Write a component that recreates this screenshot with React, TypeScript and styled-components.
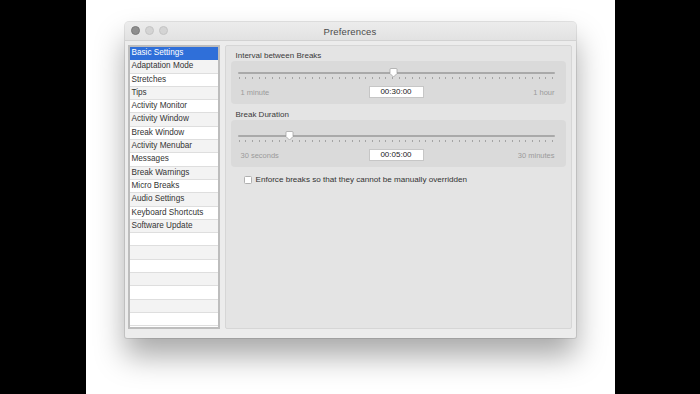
import React from "react";
import styled, { createGlobalStyle } from "styled-components";

const Global = createGlobalStyle`
  html, body { margin: 0; padding: 0; background: #000; }
  body { font-family: "Liberation Sans", Arial, sans-serif; }
  #root { width: 700px; height: 394px; }
`;

const Stage = styled.div`
  width: 700px;
  height: 394px;
  display: flex;
  justify-content: center;
  background: #000;
`;

const Canvas = styled.div`
  width: 529px;
  height: 394px;
  background: #fff;
  padding: 22px 0 0 39px;
  box-sizing: border-box;
`;

const Window = styled.div`
  width: 451px;
  height: 316px;
  background: #ececec;
  border-radius: 4px 4px 2px 2px;
  box-shadow: 0 18px 30px rgba(0, 0, 0, 0.34), 0 0 0 1px rgba(0, 0, 0, 0.1);
  display: flex;
  flex-direction: column;
  overflow: hidden;
`;

const TitleBar = styled.div`
  height: 18px;
  position: relative;
  display: flex;
  align-items: center;
  justify-content: center;
  background: linear-gradient(#ececec, #e2e2e2);
  border-bottom: 1px solid #d2d2d2;
  flex-shrink: 0;
`;

const Lights = styled.div`
  position: absolute;
  left: 6px;
  top: 4px;
  display: flex;
  gap: 5px;
`;

const Light = styled.span<{ $dark?: boolean }>`
  width: 9px;
  height: 9px;
  border-radius: 50%;
  background: ${(p) => (p.$dark ? "#8e8e8e" : "#d4d4d4")};
  border: 0.5px solid ${(p) => (p.$dark ? "#7a7a7a" : "#c4c4c4")};
  box-sizing: border-box;
`;

const Title = styled.div`
  font-size: 9.5px;
  color: #4a4a4a;
  letter-spacing: 0.15px;
`;

const Body = styled.div`
  flex: 1;
  display: flex;
  gap: 5px;
  padding: 4px 4px 9px 3px;
`;

const Sidebar = styled.div`
  width: 92px;
  border: 2px solid #bdbdbd;
  box-sizing: border-box;
  background: #fff;
  display: flex;
  flex-direction: column;
  overflow: hidden;
`;

const Row = styled.div<{ $selected?: boolean; $alt?: boolean }>`
  height: 13.3px;
  flex-shrink: 0;
  box-sizing: border-box;
  padding-left: 2px;
  font-size: 8.2px;
  line-height: 12.3px;
  white-space: nowrap;
  color: ${(p) => (p.$selected ? "#fff" : "#333")};
  background: ${(p) => (p.$selected ? "#2f6fd9" : p.$alt ? "#f3f3f3" : "#fff")};
  border-bottom: 1px solid ${(p) => (p.$selected ? "#2f6fd9" : "#dedede")};
`;

const Panel = styled.div`
  flex: 1;
  background: #e4e4e4;
  border: 1px solid #d6d6d6;
  border-radius: 2px;
  padding: 4px 5px 0 5px;
  display: flex;
  flex-direction: column;
`;

const SectionLabel = styled.div<{ $top: number }>`
  font-size: 8px;
  line-height: 10px;
  color: #3a3a3a;
  padding-left: 5px;
  margin-top: ${(p) => p.$top}px;
`;

const Group = styled.div<{ $padTop: number }>`
  background: #dadada;
  border-radius: 4px;
  padding: ${(p) => p.$padTop}px 11px 6px 7px;
  display: flex;
  flex-direction: column;
`;

const SliderArea = styled.div`
  position: relative;
  height: 14px;
`;

const Track = styled.div`
  position: absolute;
  left: 0;
  right: 0;
  top: 0;
  height: 2px;
  border-radius: 1px;
  background: #a9a9a9;
`;

const Ticks = styled.div`
  position: absolute;
  left: 1px;
  right: 1px;
  top: 5px;
  display: flex;
  justify-content: space-between;
`;

const Tick = styled.span`
  width: 1px;
  height: 2px;
  background: #a4a4a4;
`;

const Knob = styled.svg`
  position: absolute;
  top: -4px;
  margin-left: -4px;
`;

const BottomRow = styled.div`
  display: grid;
  grid-template-columns: 1fr auto 1fr;
  align-items: center;
  height: 12px;
`;

const EndLabel = styled.span<{ $right?: boolean }>`
  font-size: 7.5px;
  color: #9a9a9a;
  justify-self: ${(p) => (p.$right ? "end" : "start")};
  padding-left: ${(p) => (p.$right ? 0 : 3)}px;
`;

const Field = styled.div`
  width: 55px;
  height: 12px;
  box-sizing: border-box;
  background: #fff;
  border: 1px solid #c6c6c6;
  font-size: 8px;
  line-height: 10px;
  text-align: center;
  color: #222;
`;

const CheckRow = styled.label`
  display: flex;
  align-items: center;
  gap: 4px;
  margin-top: 8px;
  padding-left: 13px;
  font-size: 8.1px;
  color: #333;
`;

const Box = styled.span`
  width: 8px;
  height: 8px;
  box-sizing: border-box;
  background: #fff;
  border: 1px solid #b0b0b0;
  border-radius: 1.5px;
`;

const items = [
  "Basic Settings",
  "Adaptation Mode",
  "Stretches",
  "Tips",
  "Activity Monitor",
  "Activity Window",
  "Break Window",
  "Activity Menubar",
  "Messages",
  "Break Warnings",
  "Micro Breaks",
  "Audio Settings",
  "Keyboard Shortcuts",
  "Software Update",
];

const rows = [...items, ...Array(7).fill("")];

function Slider({ fraction, ticks }: { fraction: number; ticks: number }) {
  return (
    <SliderArea>
      <Track />
      <Ticks>
        {Array.from({ length: ticks }).map((_, i) => (
          <Tick key={i} />
        ))}
      </Ticks>
      <Knob width="9" height="10" viewBox="0 0 9 10" style={{ left: `${fraction * 100}%` }}>
        <path
          d="M1 1.5 Q1 0.5 2 0.5 H7 Q8 0.5 8 1.5 V5.5 L4.5 9 L1 5.5 Z"
          fill="#fff"
          stroke="#9c9c9c"
          strokeWidth="0.7"
        />
      </Knob>
    </SliderArea>
  );
}

export default function App() {
  return (
    <Stage>
      <Global />
      <Canvas>
        <Window>
          <TitleBar>
            <Lights>
              <Light $dark />
              <Light />
              <Light />
            </Lights>
            <Title>Preferences</Title>
          </TitleBar>
          <Body>
            <Sidebar>
              {rows.map((t, i) => (
                <Row key={i} $selected={i === 0} $alt={i % 2 === 1}>
                  {t}
                </Row>
              ))}
            </Sidebar>
            <Panel>
              <SectionLabel $top={1}>Interval between Breaks</SectionLabel>
              <Group $padTop={11}>
                <Slider fraction={0.49} ticks={48} />
                <BottomRow>
                  <EndLabel>1 minute</EndLabel>
                  <Field>00:30:00</Field>
                  <EndLabel $right>1 hour</EndLabel>
                </BottomRow>
              </Group>
              <SectionLabel $top={6}>Break Duration</SectionLabel>
              <Group $padTop={15}>
                <Slider fraction={0.164} ticks={48} />
                <BottomRow>
                  <EndLabel>30 seconds</EndLabel>
                  <Field>00:05:00</Field>
                  <EndLabel $right>30 minutes</EndLabel>
                </BottomRow>
              </Group>
              <CheckRow>
                <Box />
                Enforce breaks so that they cannot be manually overridden
              </CheckRow>
            </Panel>
          </Body>
        </Window>
      </Canvas>
    </Stage>
  );
}
